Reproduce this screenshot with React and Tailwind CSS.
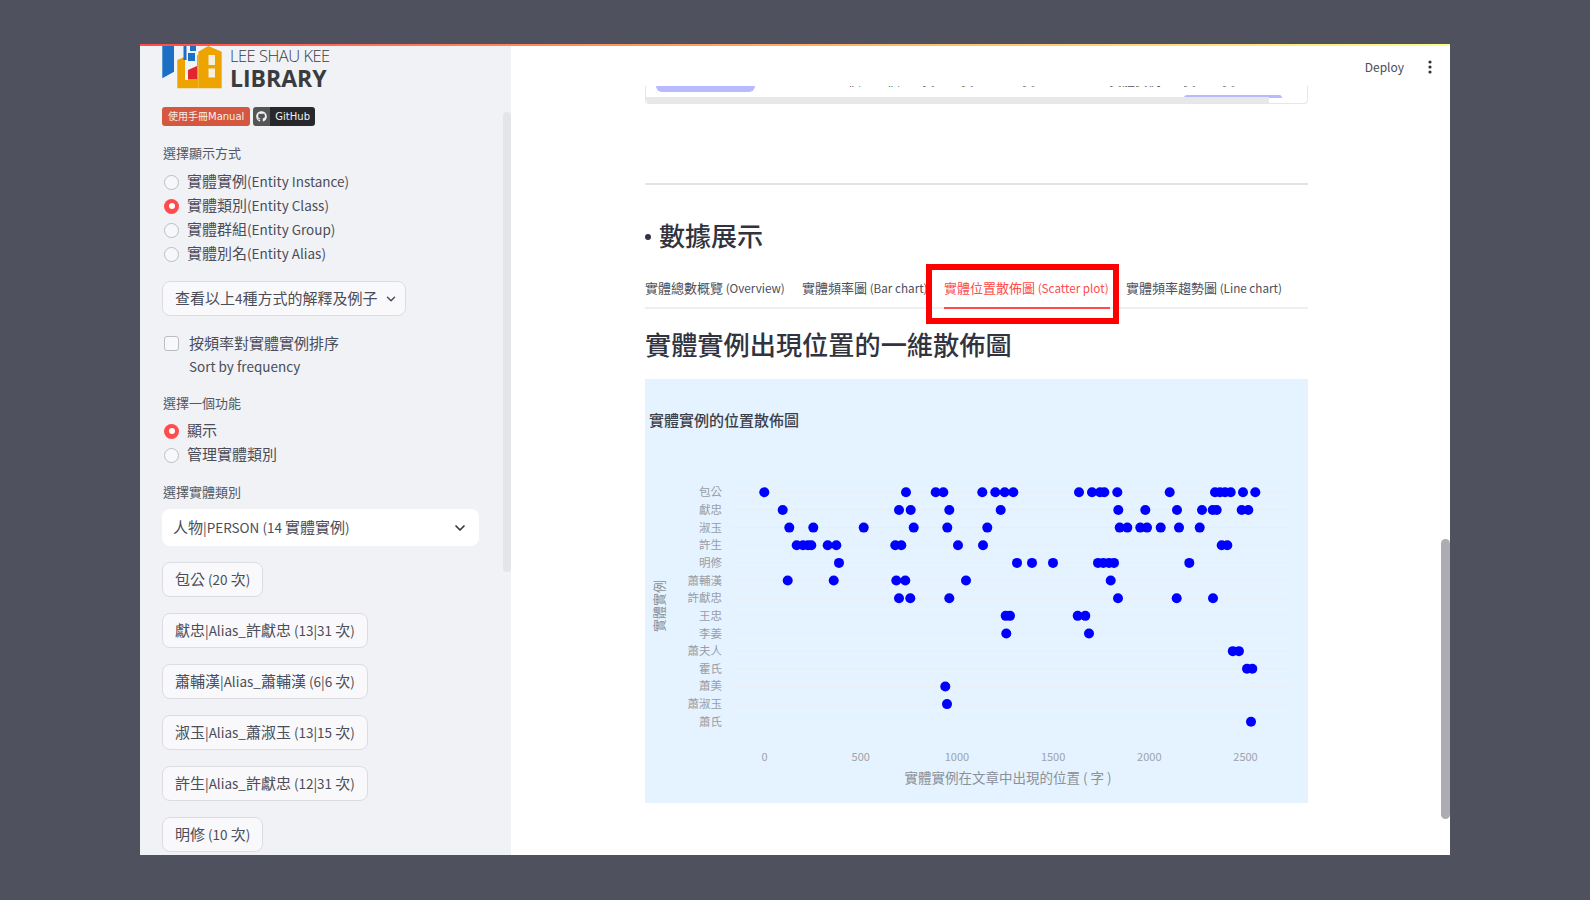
import { FaGithub } from "react-icons/fa";
import { ChevronDown } from "lucide-react";

const rows = [
  ["包公", [764.3, 906, 935.7, 943.3, 982.3, 995.3, 1004.7, 1013.3, 1079, 1092, 1100, 1104.3, 1117.3, 1169.7, 1215, 1220, 1225, 1230.7, 1243, 1255.3]],
  ["獻忠", [782.7, 899, 910.7, 949.3, 1000.7, 1118.3, 1145.3, 1177, 1202, 1212.7, 1216.7, 1241.7, 1248.3]],
  ["淑玉", [789.3, 813.3, 863.7, 913.7, 947.3, 987.3, 1119.7, 1127.3, 1140.3, 1147, 1160.7, 1179, 1199.7]],
  ["許生", [796.7, 803, 808, 811.3, 827.7, 836.3, 895.3, 901.3, 958, 983, 1221.7, 1227.3]],
  ["明修", [839, 1017, 1032, 1053, 1098, 1103.3, 1109, 1114, 1189.3]],
  ["蕭輔漢", [787.7, 833.7, 896.3, 905.3, 966, 1110.7]],
  ["許獻忠", [899, 910.3, 949.3, 1118, 1176.7, 1213]],
  ["王忠", [1005.7, 1010, 1077.7, 1085.3]],
  ["李姜", [1006.3, 1089]],
  ["蕭夫人", [1232.8, 1238.9]],
  ["霍氏", [1247, 1252.3]],
  ["蕭美", [945.3]],
  ["蕭淑玉", [947]],
  ["蕭氏", [1251]],
];

const ticks = [0, 500, 1000, 1500, 2000, 2500];

// latin runs sit a bit smaller than the CJK around them
function Mixed({ text }) {
  return (
    <span>
      {text.split(/([\u3000-\u9fff]+)/).map((part, i) =>
        i % 2 ? (
          <span key={i}>{part}</span>
        ) : (
          <span key={i} className="text-[0.9em]">
            {part}
          </span>
        ),
      )}
    </span>
  );
}

function Radio({ label, checked }) {
  return (
    <div className="flex h-6 items-center">
      {checked ? (
        <span className="ml-[2px] flex h-[15px] w-[15px] items-center justify-center rounded-full bg-[#ff4b4b]">
          <span className="h-[6px] w-[6px] rounded-full bg-white" />
        </span>
      ) : (
        <span className="ml-[2px] h-[15px] w-[15px] rounded-full border-[1.5px] border-[#bcbdc3] bg-[#f7f8fa]" />
      )}
      <span className="ml-2 -translate-y-px text-[15px] whitespace-nowrap text-[#4b4d59]">
        <Mixed text={label} />
      </span>
    </div>
  );
}

function Label({ children, className }) {
  return <div className={`flex h-5 items-center pl-px text-[13px] text-[#55575f] ${className}`}>{children}</div>;
}

function EntityButton({ label }) {
  return (
    <div className="flex h-[35px] w-fit items-center rounded-lg border border-[#dcdde2] bg-[#f9f9fb] px-3 text-[15px] whitespace-nowrap text-[#4b4d59]">
      <Mixed text={label} />
    </div>
  );
}

function Logo() {
  return (
    <div className="flex h-[46px] items-start">
      <svg width="64" height="44" viewBox="0 0 64 44" className="shrink-0">
        <polygon points="0.3,0 12,0 12,25.7 0.3,32.3" fill="#1b6fc4" />
        <polygon points="15.3,14 23,10.7 36.3,9 36.3,42.3 15.3,42.3" fill="#eea400" />
        <polygon points="36.3,5.7 46.3,0 59.7,5.7 59.7,42.3 36.3,42.3" fill="#eea400" />
        <rect x="23" y="0" width="12" height="34" fill="#f0f2f6" />
        <rect x="21.5" y="0" width="3" height="14" fill="#1b6fc4" />
        <rect x="28" y="0" width="6" height="5" fill="#1b6fc4" />
        <rect x="26" y="7" width="7" height="8" fill="#1b6fc4" />
        <polygon points="26,24 35,20 35,33.5 26,33.5" fill="#e3262e" />
        <rect x="46.5" y="9" width="6.5" height="10" fill="#f5f0e0" />
        <rect x="46.5" y="22.5" width="6.5" height="9" fill="#f5f0e0" />
      </svg>
      <div className="ml-[4px] flex flex-col font-['Open_Sans',sans-serif] text-[#3b3b3f]">
        <span className="h-[20px] text-[16.5px] leading-[20px] font-light tracking-[-0.5px] whitespace-nowrap">
          LEE SHAU KEE
        </span>
        <span className="h-[24px] text-[23px] leading-[24px] font-bold whitespace-nowrap">LIBRARY</span>
      </div>
    </div>
  );
}

function Sidebar() {
  return (
    <aside className="relative w-[371px] shrink-0 overflow-hidden bg-[#f0f2f6] pt-[2px] pl-[22px]">
      <Logo />
      <div className="mt-[15px] flex h-[19px] gap-[3px] font-['DejaVu_Sans','Noto_Sans_CJK_TC',sans-serif] text-[10px] leading-[19px]">
        <div className="rounded-[3px] bg-[#d5573f] px-[6px] whitespace-nowrap text-[#f8efe9]">使用手冊Manual</div>
        <div className="flex overflow-hidden rounded-[3px] text-[#f2f2f2]">
          <span className="flex w-[17px] items-center justify-center bg-[#555]">
            <FaGithub className="h-[11px] w-[11px]" />
          </span>
          <span className="bg-[#26282c] pr-[5px] pl-[5px]">GitHub</span>
        </div>
      </div>

      <Label className="mt-[17px]">選擇顯示方式</Label>
      <div className="mt-[7px]">
        <Radio label="實體實例(Entity Instance)" />
        <Radio label="實體類別(Entity Class)" checked />
        <Radio label="實體群組(Entity Group)" />
        <Radio label="實體別名(Entity Alias)" />
      </div>

      <div className="mt-[15px] flex h-[35px] w-[244px] items-center rounded-lg border border-[#dcdde2] bg-[#f9f9fb] pl-3 text-[15px] whitespace-nowrap text-[#4b4d59]">
        <Mixed text="查看以上4種方式的解釋及例子" />
        <ChevronDown className="ml-[6px] h-[14px] w-[14px]" strokeWidth={2.5} />
      </div>

      <div className="mt-[16px] flex h-[23px] items-center">
        <span className="ml-[2px] h-[15px] w-[15px] rounded-[3px] border-[1.5px] border-[#bcbdc3] bg-[#f7f8fa]" />
        <span className="ml-[10px] text-[15px] text-[#4b4d59]">按頻率對實體實例排序</span>
      </div>
      <div className="flex h-[23px] items-center pl-[27px] text-[15px] text-[#4b4d59]">
        <Mixed text="Sort by frequency" />
      </div>

      <Label className="mt-[15px]">選擇一個功能</Label>
      <div className="mt-[6px]">
        <Radio label="顯示" checked />
        <Radio label="管理實體類別" />
      </div>

      <Label className="mt-[15px]">選擇實體類別</Label>
      <div className="mt-[7px] flex h-[37px] w-[317px] items-center justify-between rounded-lg bg-white pr-[11px] pl-[11px] text-[15px] text-[#4b4d59]">
        <Mixed text="人物|PERSON (14 實體實例)" />
        <ChevronDown className="h-4 w-4 text-[#31333f]" strokeWidth={2.5} />
      </div>

      <div className="mt-4 flex flex-col gap-4">
        <EntityButton label="包公 (20 次)" />
        <EntityButton label="獻忠|Alias_許獻忠 (13|31 次)" />
        <EntityButton label="蕭輔漢|Alias_蕭輔漢 (6|6 次)" />
        <EntityButton label="淑玉|Alias_蕭淑玉 (13|15 次)" />
        <EntityButton label="許生|Alias_許獻忠 (12|31 次)" />
        <EntityButton label="明修 (10 次)" />
      </div>

      {/* sidebar scrollbar */}
      <div className="absolute top-[68px] right-0 h-[460px] w-[8px] rounded-full bg-[#e4e5e7]" />
    </aside>
  );
}

function ScatterChart() {
  return (
    <svg width="663" height="424" viewBox="0 0 663 424" className="mt-[14px] block bg-[#e4f3ff]">
      <text x="4" y="47" fontSize="15" fontWeight="500" fill="#3c3e48">
        實體實例的位置散佈圖
      </text>
      {rows.map(([name, xs], i) => {
        const y = 113.3 + i * 17.65;
        return (
          <g key={name}>
            <line x1="86" x2="645" y1={y} y2={y} stroke="#e9eef4" strokeWidth="1" />
            <text x="77" y={y + 4} fontSize="11.5" textAnchor="end" fill="#9a9da5">
              {name}
            </text>
            {xs.map((x) => (
              <circle key={x} cx={x - 645} cy={y} r="5" fill="#0000ff" />
            ))}
          </g>
        );
      })}
      {ticks.map((t, i) => (
        <text key={t} x={119.5 + i * 96.2} y="382" fontSize="11" textAnchor="middle" fill="#a0a3aa">
          {t}
        </text>
      ))}
      <text x="363" y="404" fontSize="13.5" textAnchor="middle" fill="#8c9098">
        實體實例在文章中出現的位置 ( 字 )
      </text>
      <text transform="translate(19 227) rotate(-90)" fontSize="13" textAnchor="middle" fill="#8c9098">
        實體實例
      </text>
    </svg>
  );
}

function Tabs() {
  return (
    <div className="relative mt-[15px] flex h-10 gap-4 border-b-2 border-[#eeeff1] text-[13px] whitespace-nowrap text-[#4b4d59]">
      <div className="flex w-[141px] items-center">
        <Mixed text="實體總數概覽 (Overview)" />
      </div>
      <div className="flex w-[126px] items-center overflow-hidden">
        <Mixed text="實體頻率圖 (Bar chart)" />
      </div>
      <div className="-mb-[2px] flex w-[166px] items-center border-b-2 border-[#ff4b4b] text-[#ff4b4b]">
        <Mixed text="實體位置散佈圖 (Scatter plot)" />
      </div>
      <div className="flex items-center">
        <Mixed text="實體頻率趨勢圖 (Line chart)" />
      </div>
      {/* highlight box drawn over the tabs */}
      <div className="absolute top-[-5px] left-[281px] h-[60px] w-[193px] border-[6px] border-[#ff0000]" />
    </div>
  );
}

function Main() {
  return (
    <main className="relative min-w-0 flex-1 bg-white">
      <header className="flex h-[42px] items-center justify-end pt-1">
        <span className="text-[12px] text-[#4b4d59]">Deploy</span>
        <svg width="4" height="14" viewBox="0 0 4 14" className="mr-[18px] ml-[24px]" fill="#31333f">
          <circle cx="2" cy="2" r="1.6" />
          <circle cx="2" cy="7" r="1.6" />
          <circle cx="2" cy="12" r="1.6" />
        </svg>
      </header>

      <div className="ml-[134px] w-[663px] text-[#31333f]">
        {/* end of the table scrolled out of view */}
        <div className="relative h-[18px] overflow-hidden rounded-b border-x border-b border-[#e6e6ea]">
          <div className="absolute top-[-14px] left-[16px] flex gap-[22px] text-[13px] leading-[16px] whitespace-nowrap text-[#555]">
            <span>實體實例</span>
            <span className="ml-[44px]">一</span>
            <span className="ml-[20px]">一個一一個</span>
            <span>實一一實一一</span>
            <span>實一一</span>
            <span>一一實體實例</span>
            <span>實一一實</span>
            <span>一</span>
          </div>
          <div className="absolute top-0 left-[10px] h-[6px] w-[99px] rounded-b-md bg-[#b9b9ff]" />
          <div className="absolute top-[9px] left-[538px] h-[3px] w-[98px] rounded-t-md bg-[#b9b9ff]" />
          <div className="absolute right-[38px] bottom-0 left-0 h-[6px] rounded-bl bg-[#e8e8e8]" />
        </div>

        <div className="mt-[79px] h-[2px] bg-[#e3e3e6]" />

        <h2 className="mt-[29px] flex h-10 items-center text-[26px] font-medium">
          <span className="mr-[8px] h-[6px] w-[6px] translate-y-[3px] rounded-full bg-[#31333f]" />
          數據展示
        </h2>

        <Tabs />

        <h2 className="mt-[16px] flex h-10 items-center text-[26.2px] font-medium whitespace-nowrap">
          實體實例出現位置的一維散佈圖
        </h2>

        <ScatterChart />
      </div>

      {/* page scrollbar */}
      <div className="absolute top-[495px] right-0 h-[280px] w-[9px] rounded-full bg-[#acacb2]" />
    </main>
  );
}

export default function App() {
  return (
    <div className="h-screen w-full overflow-hidden bg-[#50515f] pt-[44px] pl-[140px] font-['Noto_Sans_CJK_TC','Noto_Sans',sans-serif]">
      <div className="relative flex h-[811px] w-[1310px] overflow-hidden">
        <div className="absolute top-0 right-0 left-0 z-10 h-[2px] bg-linear-to-r from-[#ff4b4b] to-[#fffd80]" />
        <Sidebar />
        <Main />
      </div>
    </div>
  );
}
